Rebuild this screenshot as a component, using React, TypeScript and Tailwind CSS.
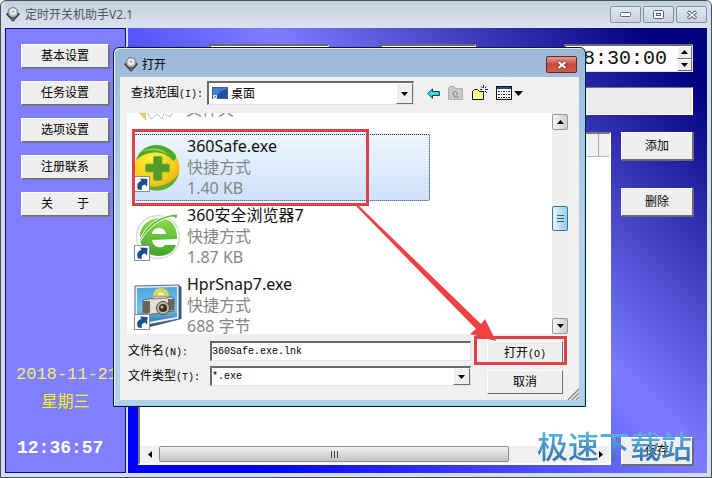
import type { ReactNode } from "react";

const raised =
  "border border-t-white border-l-white border-r-[#6e6e6e] border-b-[#6e6e6e] bg-[#efefef]";
const sunken =
  "border-t-2 border-l-2 border-b border-r border-t-[#6a6a6a] border-l-[#6a6a6a] border-b-[#e3e3e3] border-r-[#e3e3e3] bg-white";

function Latin({ children }: { children: ReactNode }) {
  return <span className="font-['Liberation_Mono',monospace] text-[10px]">{children}</span>;
}

function AppIcon() {
  return (
    <svg width="14" height="15" viewBox="0 0 14 15" aria-hidden="true">
      <path d="M0 7 L3 5 H11 L14 7 L8 14 Q7 15 6 14Z" fill="#2b2e33" />
      <path d="M3 10 L7 14 L11 10 L7 12Z" fill="#70757c" />
      <circle cx="7" cy="5.5" r="5" fill="#b9bdc2" stroke="#666b72" strokeWidth="0.8" />
      <circle cx="7" cy="4.8" r="3.2" fill="#e9ebee" />
      <circle cx="7" cy="4.6" r="0.9" fill="#777" />
    </svg>
  );
}

function Triangle({ dir }: { dir: "up" | "down" | "left" | "right" }) {
  const points = {
    up: "0,4 7,4 3.5,0",
    down: "0,0 7,0 3.5,4",
    left: "4,0 4,7 0,3.5",
    right: "0,0 0,7 4,3.5",
  }[dir];
  const tall = dir === "left" || dir === "right";
  return (
    <svg width={tall ? 4 : 7} height={tall ? 7 : 4} aria-hidden="true">
      <polygon points={points} fill="#000" />
    </svg>
  );
}

function ShortcutBadge() {
  return (
    <g>
      <rect x="0.5" y="33.5" width="15" height="15" fill="#fff" stroke="#8a8f96" />
      <path d="M4 46.500 C2 42 4 38.500 7.500 38 L6 35.500 L13.500 36 L13 43.500 L11 41.500 C8 42 7 44 8 47Z" fill="#1b4f93" />
    </g>
  );
}

function SafeIcon() {
  return (
    <svg width="48" height="50" viewBox="0 0 48 50" className="shrink-0" aria-hidden="true">
      <defs>
        <radialGradient id="safeYellow" cx="0.4" cy="0.3" r="0.8">
          <stop offset="0" stopColor="#fff23a" />
          <stop offset="0.6" stopColor="#f8cf1c" />
          <stop offset="1" stopColor="#ee9a12" />
        </radialGradient>
      </defs>
      <circle cx="23" cy="25" r="22.500" fill="url(#safeYellow)" />
      <path d="M2 17 C7 1 28 -4 41 11 C43 14 42 17 39 18 C30 6 12 8 2 17Z" fill="#4ea62b" />
      <path d="M7 9 C16 3 28 4 35 12 C27 7 17 6 7 9Z" fill="#8fce55" />
      <path d="M45 30 C41 48 19 53 7 41 C21 47 36 43 45 30Z" fill="#5fae33" />
      <path d="M20 13.500 H27 Q28 13.500 28 15 V21 H34 Q35.500 21 35.500 22.500 V28 Q35.500 29 34 29 H28 V36 Q28 37.500 27 37.500 H21 Q19.500 37.500 19.500 36 V29 H13 Q11.500 29 11.500 28 V22.500 Q11.500 21 13 21 H19.500 V15 Q19.500 13.500 20 13.500Z" fill="#57982a" stroke="#7db52c" strokeWidth="1" />
      <ShortcutBadge />
    </svg>
  );
}

function BrowserIcon() {
  return (
    <svg width="48" height="50" viewBox="0 0 48 50" className="shrink-0" aria-hidden="true">
      <defs>
        <linearGradient id="browserGreen" x1="0" y1="0" x2="0" y2="1">
          <stop offset="0" stopColor="#8fdb4b" />
          <stop offset="1" stopColor="#3fa52a" />
        </linearGradient>
      </defs>
      <circle cx="24" cy="25" r="21.500" fill="#fff" stroke="#d5dcd3" strokeWidth="1.500" />
      <path d="M43 27 C44 11 33 5 24 6 C13 7 5 15 6 27 C7 38 15 44 25 44 C33 44 40 40 42 33 H31 C28 37 19 36 18 28 Z M18 22 C19 14 31 14 32 22Z" fill="url(#browserGreen)" fillRule="evenodd" />
      <path d="M4 34 C8 15 24 3 43 2 C44 4 43 6 42 7 C41 5 39 5 37 5 C23 8 11 18 4 34Z" fill="#62bb35" stroke="#fff" strokeWidth="1" />
      <ShortcutBadge />
    </svg>
  );
}

function CameraIcon() {
  return (
    <svg width="48" height="50" viewBox="0 0 48 50" className="shrink-0" aria-hidden="true">
      <defs>
        <linearGradient id="cameraSky" x1="0" y1="0" x2="0" y2="1">
          <stop offset="0" stopColor="#48a8e0" />
          <stop offset="0.6" stopColor="#76c3ea" />
          <stop offset="1" stopColor="#2c6da8" />
        </linearGradient>
      </defs>
      <path d="M44 4 L47.500 6 V38 L16 46 L12 44 L44 37Z" fill="#3f5477" />
      <path d="M1 5 L45 4 V38 L1 46Z" fill="#e8f2f8" stroke="#51698c" />
      <path d="M3 7 L43 6 V36 L3 43Z" fill="url(#cameraSky)" />
      <circle cx="27" cy="15" r="8" fill="#f9df3c" opacity="0.800" />
      <circle cx="27" cy="15" r="3.500" fill="#fff7a8" />
      <path d="M9 19 L22 17 L38 16 L40 18 V30 L12 34 L9 32Z" fill="#e3dfd2" stroke="#69655c" />
      <path d="M9 20 H16 V32 L12 33 L9 31Z M34 18 L40 18 V29 L34 30Z" fill="#68645e" />
      <path d="M18 18 L21 15 H31 L34 17Z" fill="#cfc9b6" stroke="#847d6c" strokeWidth="0.800" />
      <circle cx="29" cy="27" r="6.500" fill="#bdb7a5" stroke="#4e4a42" />
      <circle cx="29" cy="27" r="4" fill="#332f2c" />
      <circle cx="28" cy="26" r="1.500" fill="#e2b25a" />
      <ShortcutBadge />
    </svg>
  );
}

function MonitorIcon() {
  return (
    <svg width="16" height="13" viewBox="0 0 16 13" aria-hidden="true">
      <rect x="0.500" y="0.500" width="15" height="11" fill="#2a62b5" stroke="#4a5f80" />
      <path d="M1 1 H15 L6 11 H1Z" fill="#3f7fd0" />
      <path d="M3 11 L9 4 L15 2 V11Z" fill="#2050a2" />
      <path d="M1 8 H5 V12 H1Z" fill="#dbe8f7" />
      <path d="M2 11 L4 9" stroke="#28589c" />
    </svg>
  );
}

const menu = ["基本设置", "任务设置", "选项设置", "注册联系", "关\u3000\u3000于"];

const files = [
  { name: "360Safe.exe", kind: "快捷方式", size: "1.40 KB", icon: <SafeIcon />, selected: true },
  { name: "360安全浏览器7", kind: "快捷方式", size: "1.87 KB", icon: <BrowserIcon />, selected: false },
  { name: "HprSnap7.exe", kind: "快捷方式", size: "688 字节", icon: <CameraIcon />, selected: false },
];

function CaptionButton({ label, children }: { label: string; children: ReactNode }) {
  return (
    <button
      type="button"
      aria-label={label}
      className="flex h-[17px] w-[31px] items-center justify-center rounded-xs border border-[#8593a6] bg-linear-to-b from-[#dfe7f0] to-[#c9d4e1]"
    >
      {children}
    </button>
  );
}

function TitleBar() {
  return (
    <header className="flex h-[27px] items-center justify-between bg-linear-to-b from-[#c3d0dc] to-[#dbe4ed] pl-px">
      <div className="flex items-center gap-[5px]">
        <AppIcon />
        <h1 className="text-[12px] text-[#4c5560]">定时开关机助手V2.1</h1>
      </div>
      <div className="flex gap-0.5">
        <CaptionButton label="最小化">
          <svg width="11" height="5">
            <rect x="0.5" y="0.5" width="10" height="4" rx="1" fill="#fff" stroke="#59626e" />
          </svg>
        </CaptionButton>
        <CaptionButton label="最大化">
          <svg width="11" height="9">
            <rect x="0.5" y="0.5" width="10" height="8" rx="1" fill="#fff" stroke="#59626e" />
            <rect x="3.5" y="3.5" width="4" height="2" fill="#fff" stroke="#59626e" />
          </svg>
        </CaptionButton>
        <CaptionButton label="关闭">
          <svg width="12" height="10">
            <path d="M2 1.500 L10 8.500 M10 1.500 L2 8.500" stroke="#59626e" strokeWidth="3.600" />
            <path d="M2.500 2 L9.500 8 M9.500 2 L2.500 8" stroke="#fff" strokeWidth="1.600" />
          </svg>
        </CaptionButton>
      </div>
    </header>
  );
}

function Sidebar() {
  return (
    <nav className="flex w-[121px] shrink-0 flex-col border border-[#0a0a98] bg-[#8080ff] pt-[15px] pb-3">
      <div className="flex flex-col gap-[13px] pl-[15px]">
        {menu.map((item) => (
          <button key={item} type="button" className={`h-6 w-[88px] text-[12px] leading-none shadow-[1px_1px_0_#77779c] ${raised}`}>
            {item}
          </button>
        ))}
      </div>
      <div className="mt-auto font-['Liberation_Mono','Noto_Sans_CJK_SC',monospace] whitespace-nowrap">
        <p className="mb-1 pl-[10px] text-[17px] leading-6 text-[#f0ee70]">2018-11-21</p>
        <p className="mb-[21px] text-center text-[16px] leading-6 text-[#f5f520]">星期三</p>
        <p className="pl-[11px] text-[18px] leading-6 font-bold text-white">12:36:57</p>
      </div>
    </nav>
  );
}

function MainPanel() {
  const action = `h-7 w-full text-[12px] leading-none shadow-[1px_1px_0_#66668c] ${raised}`;
  return (
    <main className="flex min-w-0 flex-1 flex-col bg-[linear-gradient(225deg,#000080_6%,#7d7dff_43%,#0000ff_87%)] pt-4 pr-[14px] pb-2 pl-[10px]">
      <div className="flex h-7 pl-[71px]">
        <input aria-label="任务" className={`w-[120px] ${sunken}`} />
        <input aria-label="日期" className={`ml-[51px] w-[96px] ${sunken}`} />
        <div className={`ml-auto flex w-[129px] ${sunken}`}>
          <input
            aria-label="时间"
            defaultValue="18:30:00"
            className="min-w-0 flex-1 pl-[5px] font-['Liberation_Mono',monospace] text-[20px] text-[#111]"
          />
          <div className="flex w-[15px] flex-col">
            <button type="button" aria-label="增加" className={`flex flex-1 items-center justify-center ${raised}`}>
              <Triangle dir="up" />
            </button>
            <button type="button" aria-label="减少" className={`flex flex-1 items-center justify-center ${raised}`}>
              <Triangle dir="down" />
            </button>
          </div>
        </div>
      </div>
      <input aria-label="程序路径" className="mt-[15px] ml-[71px] h-7 border border-t-[#777] border-r-white border-b-white border-l-[#777] bg-[#ebebeb]" />
      <div className="mt-[17px] flex flex-1 gap-[10px]">
        <section aria-label="任务列表" className="flex min-w-0 flex-1 flex-col border-2 border-t-[#777] border-r-white border-b-white border-l-[#777] bg-white">
          <div className="flex h-[23px] border-b border-[#b5b5b5] bg-[#f0f0f0]">
            <div className="flex-1 border-r border-[#aaa]" />
            <div className="w-[10px]" />
          </div>
          <div className="mt-auto flex h-[17px] bg-[#f0f0f0]">
            <button type="button" aria-label="向左" className="flex w-[19px] items-center justify-center">
              <Triangle dir="left" />
            </button>
            <div className="flex-1 pr-[83px]">
              <div className="flex h-4 items-center justify-center gap-0.5 rounded-xs border border-[#8d8d8d] bg-linear-to-b from-[#f3f3f3] to-[#c2c2c2]">
                <i className="h-[7px] w-px bg-[#444]" />
                <i className="h-[7px] w-px bg-[#444]" />
                <i className="h-[7px] w-px bg-[#444]" />
              </div>
            </div>
            <button type="button" aria-label="向右" className="flex w-[17px] items-center justify-center">
              <Triangle dir="right" />
            </button>
          </div>
        </section>
        <div className="flex w-[72px] flex-col gap-7">
          <button type="button" className={action}>添加</button>
          <button type="button" className={action}>删除</button>
          <button type="button" className={`mt-auto ${action}`}>保存</button>
        </div>
      </div>
    </main>
  );
}

function SelectArrow() {
  return (
    <span className={`pointer-events-none flex w-[17px] items-center justify-center ${raised}`}>
      <Triangle dir="down" />
    </span>
  );
}

function FileList() {
  return (
    <div className="flex h-[221px] bg-white">
      <ul className="min-w-0 flex-1 overflow-hidden pl-[7px] text-[16px] leading-[21px]">
        <li className="flex h-[21px] items-start gap-1 overflow-hidden">
          <svg width="48" height="9" viewBox="0 0 48 9" className="shrink-0" aria-hidden="true">
            <path d="M5 0 H12 V8Z" fill="#e6cf62" />
            <path d="M14 0 L17 6 L23 1 M23 1 L28 6 L30 0 M31 1 L36 4 L38 0" fill="none" stroke="#bcbcc4" />
          </svg>
          <span className="-mt-[14px] text-[#8a8a8a]">文件夹</span>
        </li>
        {files.map((f) => (
          <li
            key={f.name}
            className={`mb-0.5 flex h-[67px] w-[296px] items-center border border-dotted ${
              f.selected
                ? "rounded-xs border-[#16324f] bg-linear-to-b from-[#eef5fd] to-[#cde2fb]"
                : "border-transparent"
            }`}
          >
            <span className="-ml-px w-[53px]">{f.icon}</span>
            <div>
              <p className="text-[#111]">{f.name}</p>
              <p className="text-[#858585]">{f.kind}</p>
              <p className="text-[#858585]">{f.size}</p>
            </div>
          </li>
        ))}
      </ul>
      <div className="flex w-4 flex-col bg-[#efefef]">
        <button type="button" aria-label="向上" className="mt-px flex h-4 items-center justify-center rounded-xs border border-[#999] bg-linear-to-r from-[#f5f5f5] to-[#cfcfcf]">
          <Triangle dir="up" />
        </button>
        <div className="mt-[76px] flex h-[25px] flex-col items-center justify-center gap-0.5 rounded-xs border border-[#3c7396] bg-linear-to-r from-[#e4f5fc] to-[#98cfe8]">
          <i className="h-px w-[7px] bg-[#2d5c78]" />
          <i className="h-px w-[7px] bg-[#2d5c78]" />
          <i className="h-px w-[7px] bg-[#2d5c78]" />
        </div>
        <button type="button" aria-label="向下" className="mt-auto flex h-4 items-center justify-center rounded-xs border border-[#999] bg-linear-to-r from-[#f5f5f5] to-[#cfcfcf]">
          <Triangle dir="down" />
        </button>
      </div>
    </div>
  );
}

function Toolbar() {
  return (
    <div className="flex h-9 items-center pb-1 pl-[11px]">
      <label htmlFor="look-in" className="w-[76px] text-[12px] whitespace-nowrap">
        查找范围<Latin>(I):</Latin>
      </label>
      <div className={`flex h-6 w-[207px] items-stretch ${sunken}`}>
        <span className="flex w-[22px] items-center justify-center">
          <MonitorIcon />
        </span>
        <select id="look-in" className="min-w-0 flex-1 appearance-none text-[12px] leading-none">
          <option>桌面</option>
        </select>
        <SelectArrow />
      </div>
      <div className="ml-[13px] flex items-center gap-2">
        <button type="button" aria-label="后退">
          <svg width="13" height="11">
            <path d="M0.800 5.500 L5.500 0.800 V3.500 H12.300 V7.500 H5.500 V10.200Z" fill="#35dfe8" stroke="#063c4a" />
          </svg>
        </button>
        <button type="button" aria-label="上一级">
          <svg width="16" height="14">
            <path d="M0.500 13.500 V2.500 L2 0.500 H6 L7.500 2.500 H14.500 V13.500Z" fill="#c9c9c9" stroke="#9b9b9b" strokeDasharray="2 1" />
            <path d="M7 5 L4 8 H6 V11 H11 M7 5 L10 8 H8" stroke="#8b8b8b" fill="none" />
          </svg>
        </button>
        <button type="button" aria-label="新建文件夹">
          <svg width="16" height="16">
            <path d="M0.500 14.500 V6.500 L2.500 4.500 H5.500 L7.500 6.500 H11.500 V14.500Z" fill="#ffff86" stroke="#111" />
            <path d="M11.500 0 V3 M11.500 6 V8 M8 4.500 H10 M13 4.500 H16 M9 1.500 L10.500 3 M14.500 1.500 L13 3 M13 6 L15 8" stroke="#222" />
          </svg>
        </button>
        <button type="button" aria-label="查看" className="flex items-center gap-0.5">
          <svg width="16" height="14">
            <rect x="0.5" y="0.5" width="15" height="13" fill="#fff" stroke="#111" />
            <rect x="1" y="1" width="14" height="2" fill="#1d4b90" />
            <path d="M2 5.500 H14 M2 8.500 H14 M2 11.500 H14" stroke="#222" strokeDasharray="2 1 1 1" />
          </svg>
          <svg width="9" height="5">
            <polygon points="0,0 9,0 4.5,5" fill="#000" />
          </svg>
        </button>
      </div>
    </div>
  );
}

function OpenDialog() {
  return (
    <div
      role="dialog"
      aria-labelledby="dialog-title"
      className="absolute top-[46px] left-[112px] w-[473px] rounded-t-md border border-[#0b1a26] bg-linear-to-b from-[#9cb9d8] via-[#b9d1ea] to-[#b4d0ec] px-1.5 pb-1.5 shadow-[inset_1px_1px_0_#e8f2fa,inset_-1px_-1px_0_#74d6f0]"
    >
      <div className="flex h-[29px] items-center justify-between pt-1 pr-0.5 pl-1">
        <div className="flex items-center gap-1">
          <AppIcon />
          <h2 id="dialog-title" className="text-[12px] text-black">打开</h2>
        </div>
        <button
          type="button"
          aria-label="关闭"
          className="flex h-[17px] w-[31px] items-center justify-center rounded-xs border border-[#6b2430] bg-linear-to-b from-[#e2a093] via-[#c8493a] to-[#c9604c]"
        >
          <svg width="12" height="10">
            <path d="M2 1.500 L10 8.500 M10 1.500 L2 8.500" stroke="#7d3b38" strokeWidth="3.600" />
            <path d="M2.500 2 L9.500 8 M9.500 2 L2.500 8" stroke="#fff" strokeWidth="2" />
          </svg>
        </button>
      </div>
      <div className="bg-[#f0f0f0]">
        <Toolbar />
        <div className="pr-[11px] pl-[7px]">
          <FileList />
        </div>
        <div className="flex pt-[7px] pr-4 pb-[6px] pl-2 text-[12px]">
          <div className="flex flex-1 flex-col gap-[5px]">
            <div className="flex h-5 items-center">
              <label htmlFor="file-name" className="w-[82px] whitespace-nowrap">
                文件名<Latin>(N):</Latin>
              </label>
              <input
                id="file-name"
                defaultValue="360Safe.exe.lnk"
                className={`h-5 min-w-0 flex-1 font-['Liberation_Mono',monospace] text-[10px] ${sunken}`}
              />
            </div>
            <div className="flex h-5 items-center">
              <label htmlFor="file-type" className="w-[82px] whitespace-nowrap">
                文件类型<Latin>(T):</Latin>
              </label>
              <div className={`flex h-5 min-w-0 flex-1 ${sunken}`}>
                <select id="file-type" className="min-w-0 flex-1 appearance-none font-['Liberation_Mono',monospace] text-[10px]">
                  <option>*.exe</option>
                </select>
                <SelectArrow />
              </div>
            </div>
          </div>
          <div className="ml-4 flex w-[76px] flex-col gap-[5px]">
            <button type="button" className={`h-6 leading-none ${raised}`}>
              打开<Latin>(O)</Latin>
            </button>
            <button type="button" className={`h-6 leading-none ${raised}`}>取消</button>
          </div>
        </div>
      </div>
      <svg width="12" height="12" className="absolute right-[6px] bottom-[6px]" aria-hidden="true">
        <path d="M1 12 L12 1 M5 12 L12 5 M9 12 L12 9" stroke="#8d8d8d" strokeWidth="1.500" />
      </svg>
    </div>
  );
}

function Annotations() {
  return (
    <div className="pointer-events-none absolute inset-0" aria-hidden="true">
      <div className="absolute top-[128px] left-[131px] h-[77px] w-[237px] border-3 border-[#d9434a]" />
      <div className="absolute top-[335px] left-[473px] h-[29px] w-[93px] border-3 border-[#d9434a]" />
      <svg width="142" height="138" className="absolute top-[203px] left-[354px]">
        <path d="M0 1 L2 0 L126 120 L130 115 L141 137 L115 130 L121 125Z" fill="#ef4044" />
      </svg>
      <p className="absolute top-[427px] left-[536px] bg-linear-to-b from-[#62bfe6] to-[#2e6da8] bg-clip-text text-[31px] leading-9 font-medium whitespace-nowrap text-transparent">
        极速下载站
      </p>
    </div>
  );
}

export default function App() {
  return (
    <div className="relative flex min-h-screen flex-col rounded-t-md border border-[#43505a] bg-[#d5dde8] px-1 pb-1 font-['Noto_Sans','Noto_Sans_CJK_SC',sans-serif] text-black">
      <TitleBar />
      <div className="flex flex-1 gap-[2px]">
        <Sidebar />
        <MainPanel />
      </div>
      <OpenDialog />
      <Annotations />
    </div>
  );
}
